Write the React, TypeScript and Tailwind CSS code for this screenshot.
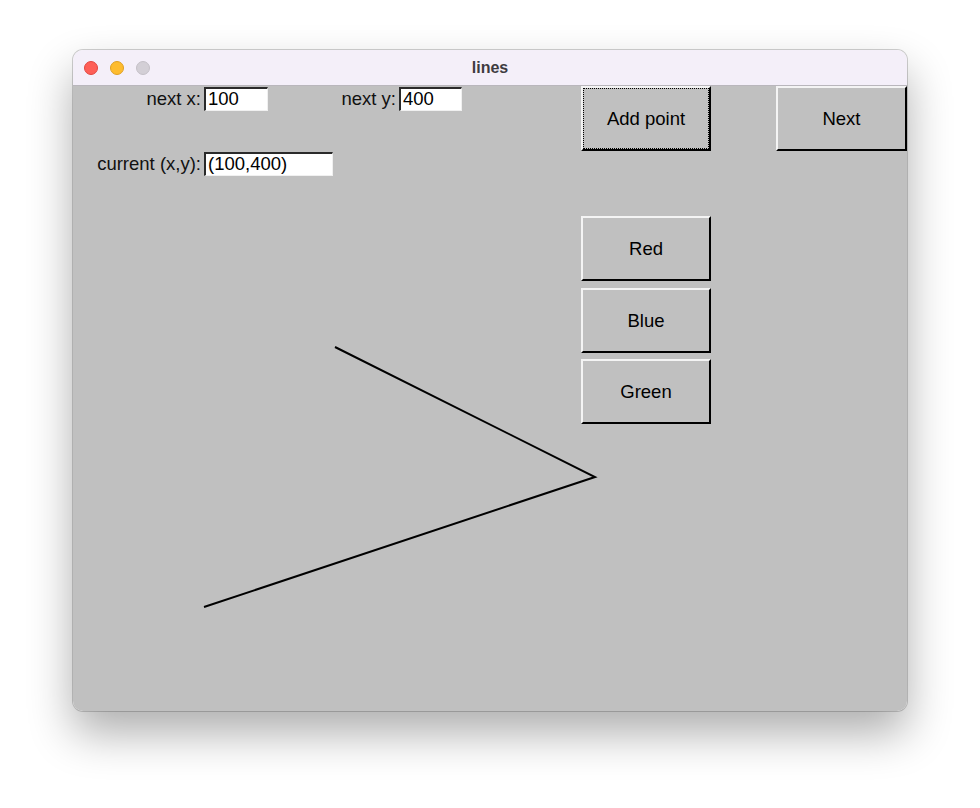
const font = { fontFamily: '"Liberation Sans", Arial, sans-serif' };

function TkButton({ label, width, focused }: { label: string; width: string; focused?: boolean }) {
  return (
    <div
      className={`relative flex h-[65px] ${width} items-center justify-center border-t-2 border-l-2 border-b-2 border-r-2 border-t-[#f4f4f4] border-l-[#f4f4f4] border-b-black border-r-black bg-[#c0c0c0] text-[18.5px] text-black`}
    >
      {focused && <span className="absolute inset-[0px] border border-dotted border-black" />}
      <span className="pt-[1px]">{label}</span>
    </div>
  );
}

function Entry({ value, width }: { value: string; width: string }) {
  return (
    <div
      className={`flex h-[24px] ${width} items-center border-t-2 border-l-2 border-b border-r border-t-[#2a2a2a] border-l-[#2a2a2a] border-b-[#f0f0f0] border-r-[#f0f0f0] bg-white pl-[2px] text-[18.5px] leading-none text-black`}
    >
      {value}
    </div>
  );
}

function Label({ text }: { text: string }) {
  return (
    <div className="w-[131px] pr-[3px] text-right text-[18.5px] leading-[24px] text-[#111]">{text}</div>
  );
}

export default function App() {
  return (
    <div className="min-h-[808px] w-[980px] bg-white pl-[73px] pt-[50px]" style={font}>
      <div className="w-[834px] overflow-hidden rounded-[10px] shadow-[0_0_0_1px_rgba(0,0,0,0.18),0_22px_45px_rgba(0,0,0,0.32)]">
        <div className="relative flex h-[36px] items-center border-b border-[#b9b6bc] bg-[#f4eff9]">
          <div className="flex gap-[12px] pl-[11px]">
            <span className="h-[14px] w-[14px] rounded-full bg-[#fe5f57] border border-[#e2463f]" />
            <span className="h-[14px] w-[14px] rounded-full bg-[#febc2e] border border-[#dfa023]" />
            <span className="h-[14px] w-[14px] rounded-full bg-[#d3cfd6] border border-[#c4c0c7]" />
          </div>
          <div className="absolute inset-0 flex items-center justify-center text-[16px] font-bold text-[#3d3b40]">lines</div>
        </div>
        <div className="relative h-[625px] bg-[#c0c0c0]">
          <div className="flex h-[65px]">
            <div className="flex w-[508px] items-start pt-px">
              <Label text="next x:" />
              <Entry value="100" width="w-[64px]" />
              <Label text="next y:" />
              <Entry value="400" width="w-[63px]" />
            </div>
            <TkButton label="Add point" width="w-[130px]" focused />
            <div className="w-[65px]" />
            <TkButton label="Next" width="w-[131px]" />
          </div>
          <div className="flex items-start pt-px">
            <Label text="current (x,y):" />
            <Entry value="(100,400)" width="w-[129px]" />
          </div>
          <div className="ml-[508px] mt-[40px] flex w-[130px] flex-col gap-[6.5px]">
            <TkButton label="Red" width="w-[130px]" />
            <TkButton label="Blue" width="w-[130px]" />
            <TkButton label="Green" width="w-[130px]" />
          </div>
          <svg className="pointer-events-none absolute inset-0" width="834" height="625">
            <polyline points="262,261 522,391 131,521" fill="none" stroke="black" strokeWidth="2" />
          </svg>
        </div>
      </div>
    </div>
  );
}
